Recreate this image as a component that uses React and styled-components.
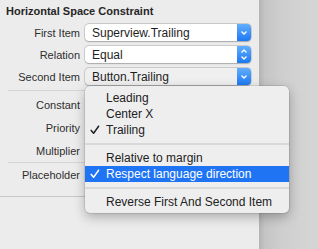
import React from "react";
import styled, { createGlobalStyle } from "styled-components";

const Global = createGlobalStyle`
  html, body { margin: 0; padding: 0; background: #d6d6d6; }
  body { font-family: "Liberation Sans", Arial, sans-serif; -webkit-font-smoothing: antialiased; }
`;

const Screen = styled.div`
  width: 318px;
  height: 249px;
  display: flex;
  overflow: hidden;
`;

const Panel = styled.div`
  position: relative;
  width: 259px;
  flex: none;
  background: #ececec;
  display: flex;
  flex-direction: column;
`;

const Side = styled.div`
  flex: 1;
  background: linear-gradient(to right, #b3b3b3 0px, #c5c5c5 6px, #cfcfcf 24px, #d6d6d6 100%);
`;

const Title = styled.div`
  height: 22px;
  padding-left: 6px;
  display: flex;
  align-items: center;
  font-size: 11px;
  font-weight: bold;
  color: #262626;
`;

const Group = styled.div`
  display: flex;
  flex-direction: column;
  gap: ${(p) => p.$gap || 0}px;
  padding: ${(p) => p.$pad || "0"};
`;

const Row = styled.div`
  display: grid;
  grid-template-columns: 80px 166px;
  column-gap: 5px;
  align-items: center;
  height: ${(p) => p.$h}px;
`;

const Label = styled.div`
  text-align: right;
  font-size: 11px;
  color: #2e2e2e;
  white-space: nowrap;
`;

const Sep = styled.div`
  height: 1px;
  margin-left: ${(p) => p.$left}px;
  width: ${(p) => p.$w}px;
  background: ${(p) => p.$c};
`;

const Popup = styled.div`
  height: 17px;
  display: flex;
  border-radius: 4px;
  background: ${(p) => (p.$pressed ? "#efefef" : "#ffffff")};
  box-shadow: 0 0 0 0.5px rgba(0, 0, 0, 0.22), 0 0.5px 1.5px rgba(0, 0, 0, 0.2);
`;

const PopupText = styled.div`
  flex: 1;
  padding-left: 7px;
  display: flex;
  align-items: center;
  font-size: 12px;
  color: #1e1e1e;
  white-space: nowrap;
  overflow: hidden;
`;

const Arrow = styled.div`
  width: 14px;
  flex: none;
  border-radius: 0 4px 4px 0;
  background: linear-gradient(#63adfd, #1c79f3);
  display: flex;
`;

const Menu = styled.div`
  position: absolute;
  left: 85px;
  top: 86px;
  width: 204px;
  padding: 4px 0 3px;
  box-sizing: border-box;
  border-radius: 5px;
  background: #eeeeee;
  box-shadow: 0 0 0 0.5px rgba(0, 0, 0, 0.18), 0 4px 12px rgba(0, 0, 0, 0.28);
  display: flex;
  flex-direction: column;
`;

const Item = styled.div`
  height: 16px;
  display: grid;
  grid-template-columns: 21px 1fr;
  align-items: center;
  font-size: 12px;
  color: ${(p) => (p.$hi ? "#ffffff" : "#222222")};
  background: ${(p) => (p.$hi ? "#1f74f4" : "transparent")};
  white-space: nowrap;
`;

const CheckBox = styled.span`
  display: flex;
  align-items: center;
  padding-left: 5px;
  color: inherit;
`;

const MenuSep = styled.div`
  height: 12px;
  display: flex;
  align-items: center;
  &::after {
    content: "";
    flex: 1;
    height: 2px;
    background: #d9d9d9;
  }
`;

const CheckIcon = () => (
  <svg width="10" height="10" viewBox="0 0 10 10">
    <path d="M1.2 5.4 L3.6 8.2 L8.6 1.2" fill="none" stroke="currentColor" strokeWidth="1.5" strokeLinecap="round" strokeLinejoin="round" />
  </svg>
);

const Chevron = ({ both }) => (
  <svg width="14" height="17" viewBox="0 0 14 17">
    {both ? (
      <>
        <path d="M4.5 6.5 L7 4 L9.5 6.5" fill="none" stroke="#fff" strokeWidth="1.3" />
        <path d="M4.5 10.5 L7 13 L9.5 10.5" fill="none" stroke="#fff" strokeWidth="1.3" />
      </>
    ) : (
      <path d="M4.5 7.5 L7 10 L9.5 7.5" fill="none" stroke="#fff" strokeWidth="1.3" />
    )}
  </svg>
);

const PopupField = ({ value, both, pressed }) => (
  <Popup $pressed={pressed}>
    <PopupText>{value}</PopupText>
    <Arrow>
      <Chevron both={both} />
    </Arrow>
  </Popup>
);

const menuItems = [
  { t: "Leading" },
  { t: "Center X" },
  { t: "Trailing", c: true },
  { sep: true },
  { t: "Relative to margin" },
  { t: "Respect language direction", c: true, hi: true },
  { sep: true },
  { t: "Reverse First And Second Item" },
];

export default function App() {
  return (
    <>
      <Global />
      <Screen>
        <Panel>
          <Title>Horizontal Space Constraint</Title>
          <Group $gap={5} $pad="2px 0 0">
            <Row $h={17}>
              <Label>First Item</Label>
              <PopupField value="Superview.Trailing" />
            </Row>
            <Row $h={17}>
              <Label>Relation</Label>
              <PopupField value="Equal" both />
            </Row>
            <Row $h={17}>
              <Label>Second Item</Label>
              <PopupField value="Button.Trailing" pressed />
            </Row>
          </Group>
          <Group $pad="5px 0 0">
            <Sep $left={8} $w={243} $c="#d5d5d5" />
          </Group>
          <Group $pad="2px 0 0">
            <Row $h={23}>
              <Label>Constant</Label>
            </Row>
            <Row $h={23}>
              <Label>Priority</Label>
            </Row>
            <Row $h={23}>
              <Label>Multiplier</Label>
            </Row>
          </Group>
          <Sep $left={8} $w={243} $c="#d5d5d5" />
          <Row $h={23}>
            <Label>Placeholder</Label>
          </Row>
          <Group $pad="10px 0 0">
            <Sep $left={0} $w={259} $c="#c6c6c6" />
          </Group>
          <Menu>
            {menuItems.map((m, i) =>
              m.sep ? (
                <MenuSep key={i} />
              ) : (
                <Item key={i} $hi={m.hi}>
                  <CheckBox>{m.c ? <CheckIcon /> : null}</CheckBox>
                  <span>{m.t}</span>
                </Item>
              )
            )}
          </Menu>
        </Panel>
        <Side />
      </Screen>
    </>
  );
}
